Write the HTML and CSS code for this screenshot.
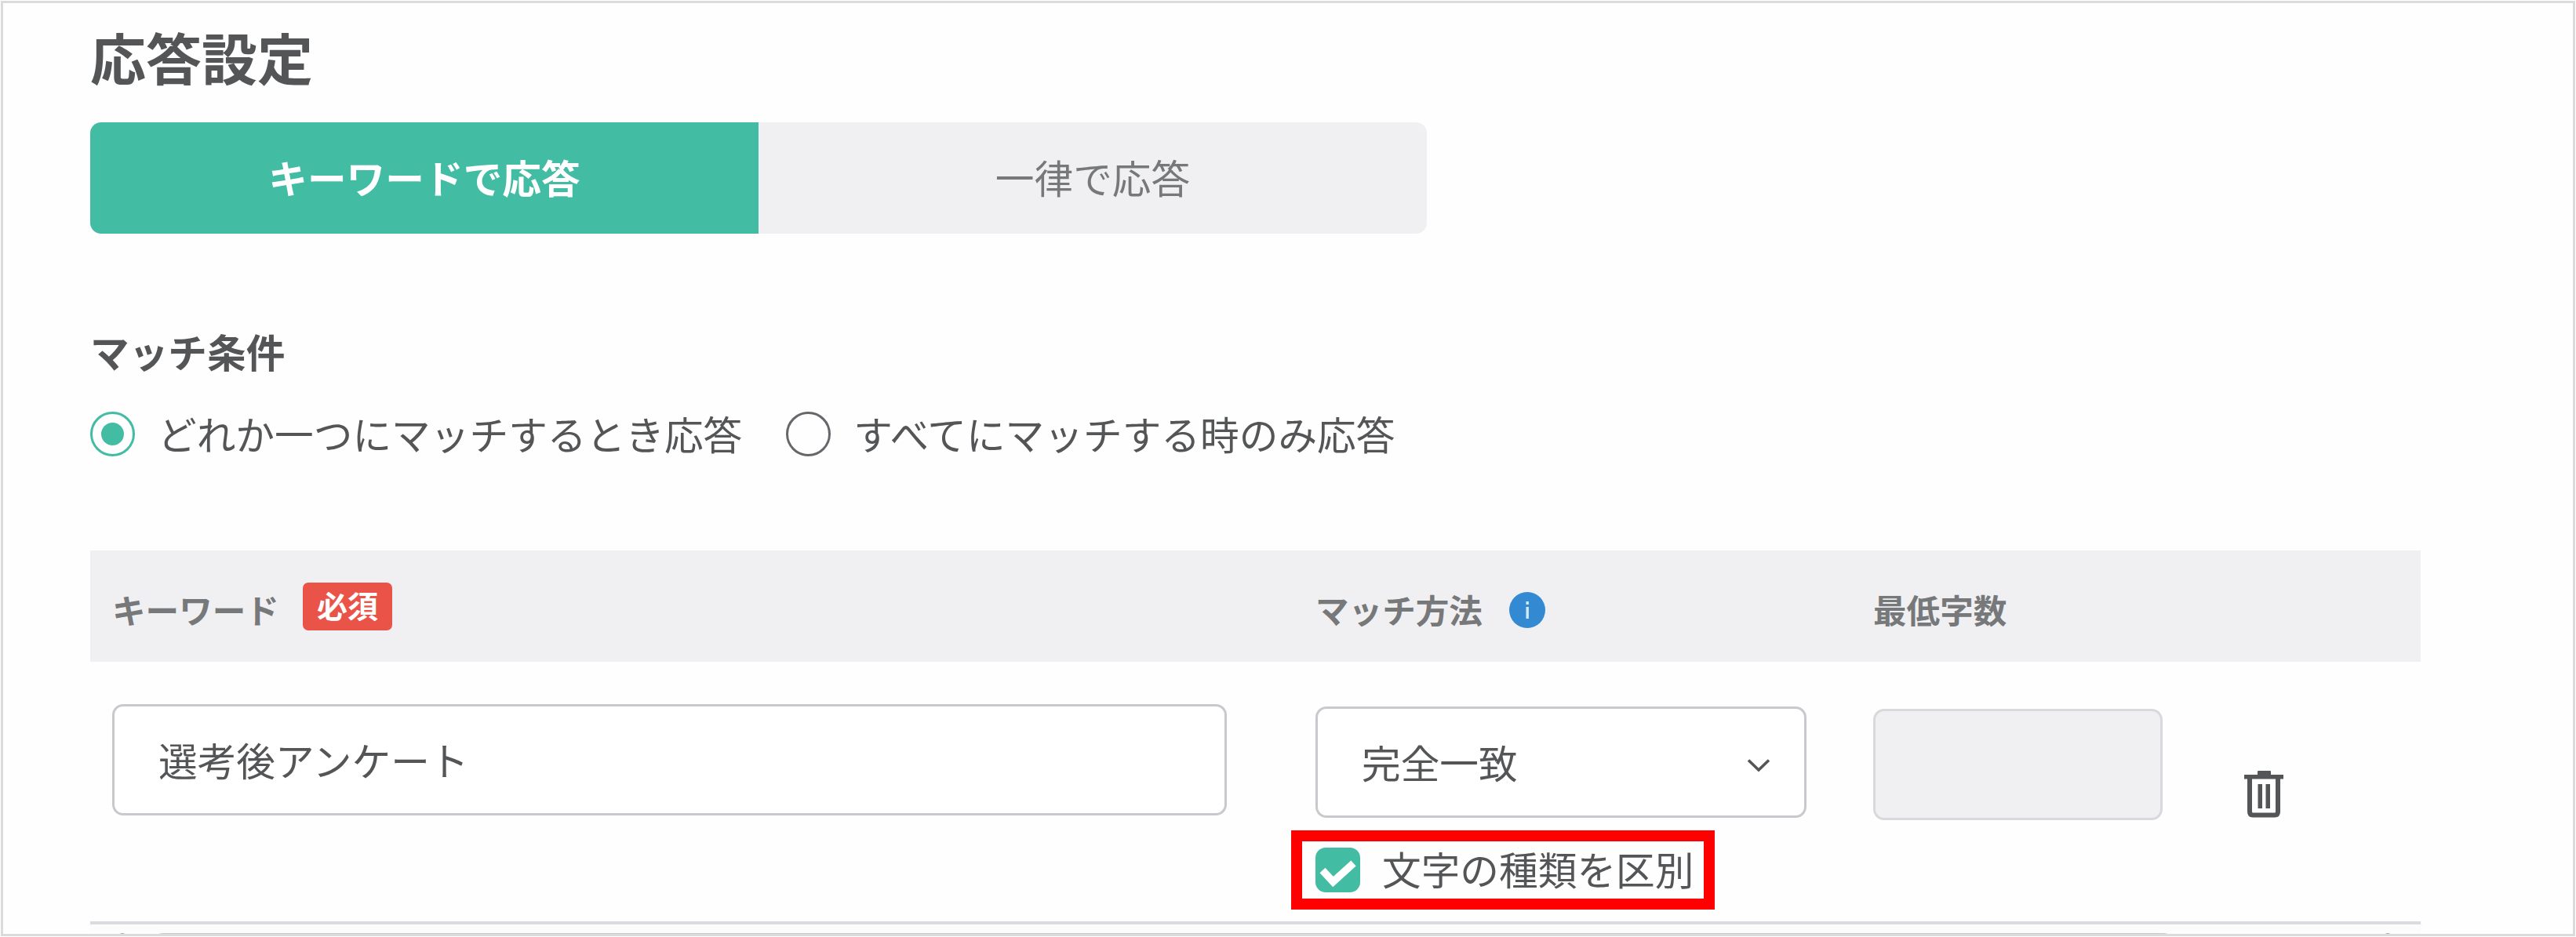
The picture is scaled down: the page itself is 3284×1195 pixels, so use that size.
FILE: index.html
```
<!DOCTYPE html>
<html lang="ja">

<head>
    <meta charset="UTF-8">
    <meta name="viewport" content="width=device-width, initial-scale=1.0">
    <title>応答設定</title>
    <link rel="stylesheet" href="styles.css">
</head>

<body>
    <main class="panel">
        <h1 class="title">応答設定</h1>

        <div class="tabs">
            <div class="tab active">キーワードで応答</div>
            <div class="tab">一律で応答</div>
        </div>

        <h2 class="subtitle">マッチ条件</h2>
        <div class="radios">
            <label class="radio"><span class="circle checked"></span><span class="text">どれか一つにマッチするとき応答</span></label>
            <label class="radio"><span class="circle"></span><span class="text">すべてにマッチする時のみ応答</span></label>
        </div>

        <div class="table">
            <div class="row head">
                <div class="cell">キーワード<span class="badge">必須</span></div>
                <div class="cell">マッチ方法
                    <svg class="info" viewBox="0 0 46 46">
                        <circle cx="23" cy="23" r="23" fill="#338ad3" />
                        <rect x="21.5" y="12" width="3.4" height="4" fill="#d5e8f7" />
                        <rect x="21.5" y="19" width="3.4" height="15" fill="#d5e8f7" />
                    </svg>
                </div>
                <div class="cell">最低字数</div>
            </div>

            <div class="row body">
                <div class="cell">
                    <div class="field keyword"><span class="text">選考後アンケート</span></div>
                </div>
                <div class="cell">
                    <div class="field select">
                        <span class="text">完全一致</span>
                        <svg class="chevron" viewBox="0 0 30 18">
                            <path d="M2 2.5 L15 15 L28 2.5" fill="none" stroke="#545557" stroke-width="3.6" />
                        </svg>
                    </div>
                    <div class="highlight">
                        <svg class="check" viewBox="0 0 57 57">
                            <rect width="57" height="57" rx="13" fill="#43bca4" />
                            <path d="M9 29 L22.5 43.5 L48.5 20" fill="none" stroke="#fff" stroke-width="9.5" />
                        </svg>
                        <span class="text">文字の種類を区別</span>
                    </div>
                </div>
                <div class="cell">
                    <div class="field disabled"></div>
                </div>
                <div class="cell">
                    <svg class="trash" viewBox="0 0 50 60">
                        <g fill="#545557">
                            <rect x="17" y="0" width="17" height="8" rx="1" />
                            <rect x="0" y="5" width="50" height="5.5" />
                            <rect x="17.5" y="17" width="5.5" height="31" />
                            <rect x="27.5" y="17" width="5.5" height="31" />
                        </g>
                        <path d="M7 9 V52 Q7 56.5 11 56.5 H39 Q43 56.5 43 52 V9" fill="none" stroke="#545557" stroke-width="6" />
                    </svg>
                </div>
            </div>

            <!-- top edge of the next row, cut off by the panel -->
            <div class="row next">
                <span class="handle"></span>
                <span class="next-field"></span>
                <span class="handle"></span>
            </div>
        </div>
    </main>
</body>

</html>
```
FILE: styles.css
```
* {
    box-sizing: border-box;
}

body {
    margin: 0;
    padding: 1px;
    width: 3284px;
    height: 1195px;
    background: #fff;
    color: #545557;
    font-family: "Noto Sans CJK JP", sans-serif;
    font-size: 49.7px;
    overflow: hidden;
}

.panel {
    width: 3282px;
    height: 1193px;
    padding: 0 0 0 111px;
    border: 3px solid #dadbdb;
    background: #fefefe;
    overflow: hidden;
}

.title {
    margin: 17px 0 35px;
    height: 100px;
    line-height: 100px;
    font-size: 71px;
    font-weight: bold;
}

.tabs {
    display: flex;
    width: 1704px;
    height: 142px;
    border-radius: 14px;
    overflow: hidden;
}

.tab {
    flex: 1;
    line-height: 139px;
    text-align: center;
    background: #f0f0f3;
    color: #77787a;
}

.tab.active {
    background: #43bca4;
    color: #fff;
    font-weight: bold;
}

.subtitle {
    margin: 109px 0 0;
    height: 80px;
    line-height: 80px;
    font-size: 49.7px;
    font-weight: bold;
}

.radios {
    display: flex;
    gap: 56px;
    margin-top: 26px;
    height: 80px;
}

.radio {
    display: flex;
    align-items: center;
    gap: 29px;
    line-height: 76px;
    white-space: nowrap;
}

.text {
    padding-bottom: 3px;
}

.circle {
    display: flex;
    width: 57px;
    height: 57px;
    border: 3.5px solid #66676a;
    border-radius: 50%;
}

.circle.checked {
    border-color: #43bca4;
}

.circle.checked::after {
    content: "";
    width: 29px;
    height: 29px;
    margin: auto;
    border-radius: 50%;
    background: #43bca4;
}

.table {
    width: 2971px;
    margin-top: 109px;
}

.row {
    display: grid;
    grid-template-columns: 1534px 711px 472px 1fr;
    padding-left: 28px;
}

.head {
    height: 142px;
    background: #f0f0f3;
    color: #77787a;
    font-size: 42.6px;
    font-weight: bold;
}

.head .cell {
    display: flex;
    align-items: center;
    padding-top: 6px;
}

.badge {
    width: 114px;
    height: 61px;
    margin: -6px 0 0 30px;
    border-radius: 7px;
    background: #e95348;
    color: #fff;
    font-size: 39px;
    line-height: 57px;
    text-align: center;
}

.info {
    width: 46px;
    height: 46px;
    margin: 3px 0 0 34px;
}

.body {
    height: 335px;
    padding-top: 54px;
    border-bottom: 4px solid #dadbde;
}

.field {
    display: flex;
    align-items: center;
    height: 142px;
    padding: 0 56px;
    border: 3.5px solid #c8c9cd;
    border-radius: 14px;
    background: #fff;
}

.keyword {
    width: 1421px;
}

.select {
    justify-content: space-between;
    width: 626px;
    margin-top: 3px;
    padding-right: 43px;
}

.chevron {
    width: 30px;
    height: 18px;
    margin-top: 8px;
}

.disabled {
    width: 369px;
    margin-top: 6px;
    border-color: #d8d9dc;
    background: #f0f0f3;
}

.highlight {
    display: flex;
    align-items: center;
    gap: 28px;
    width: 540px;
    height: 101px;
    margin: 16px 0 0 -31px;
    padding-left: 17px;
    border: 14px solid #f00;
    line-height: 66px;
    white-space: nowrap;
}

.check {
    width: 57px;
    height: 57px;
}

.highlight .text {
    padding-bottom: 6px;
}

.trash {
    display: block;
    width: 50px;
    height: 60px;
    margin: 85px 0 0 1px;
}

.next {
    display: flex;
    align-items: flex-start;
    height: 142px;
    padding: 11px 0 0 35px;
    background: #fcfcfc;
}

.handle {
    width: 12px;
    height: 12px;
    border-radius: 50%;
    background: #aaabad;
}

.next-field {
    width: 2578px;
    height: 100px;
    margin: 0 266px 0 32px;
    border: 3px solid #c8c9cd;
    border-radius: 14px;
}
```
